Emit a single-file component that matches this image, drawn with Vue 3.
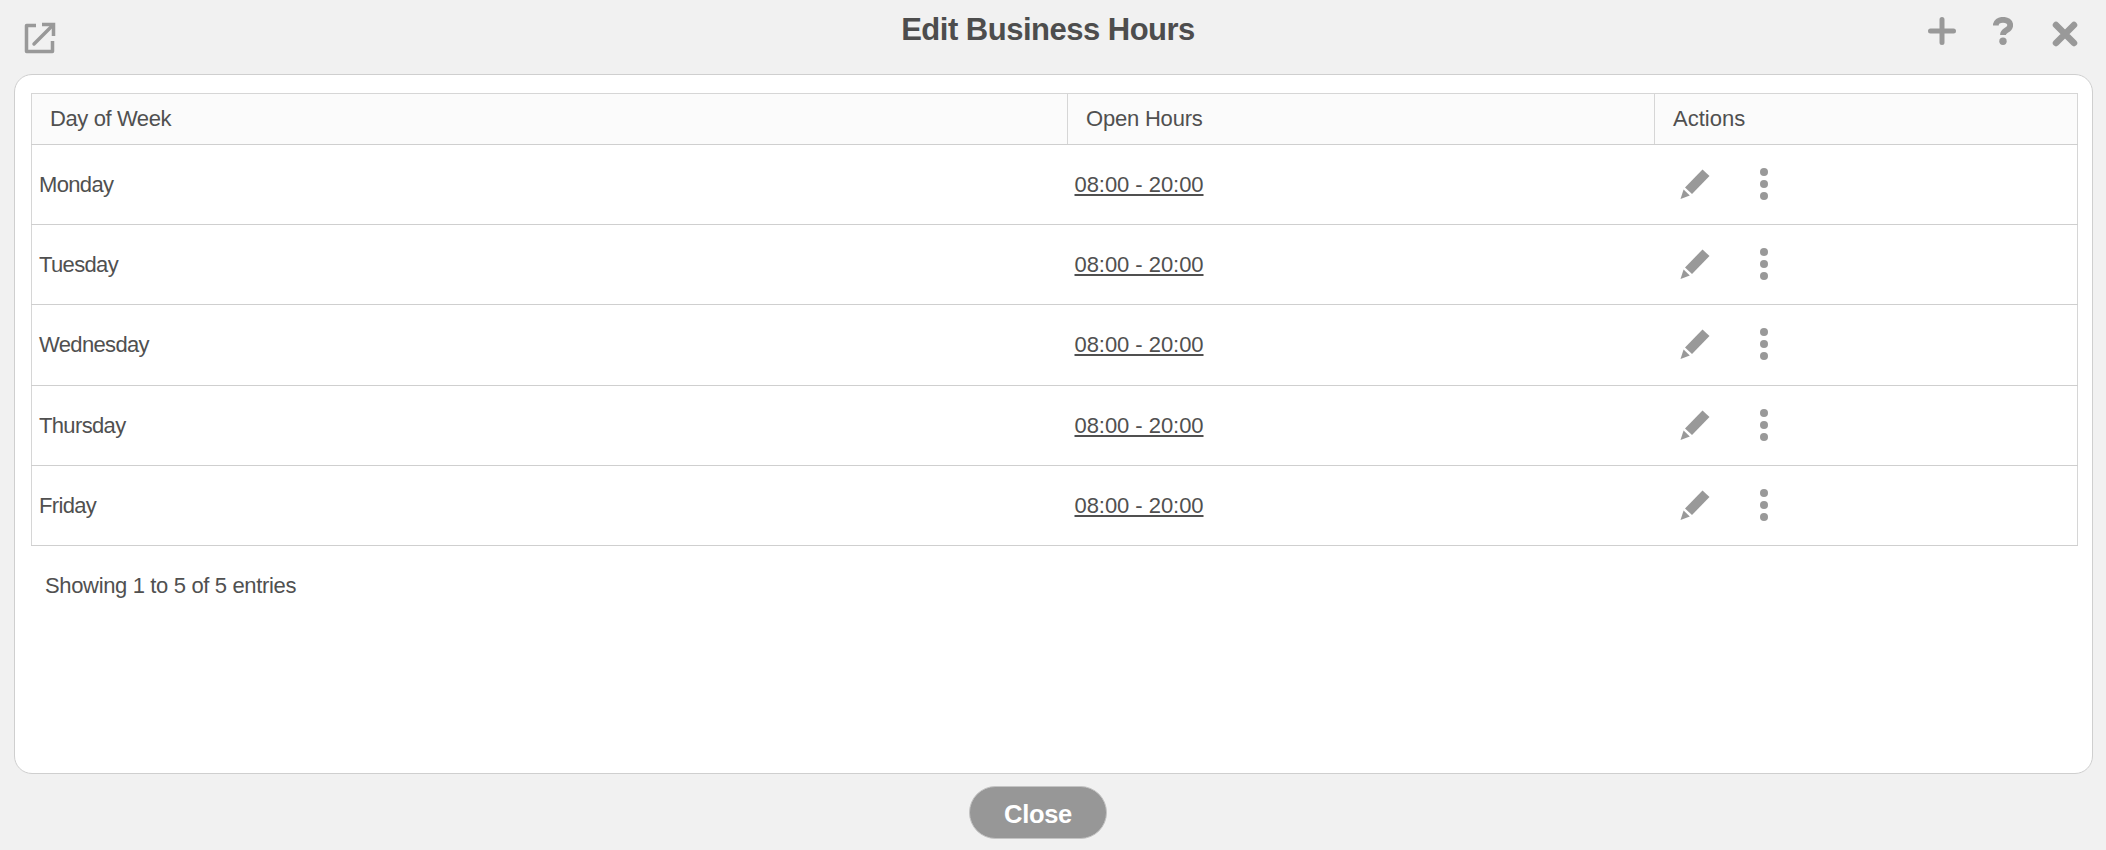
<template>
  <div class="page">
    <header class="top-bar">
      <div class="top-left">
        <button type="button" class="icon-btn popout" aria-label="Open in new window">
          <svg width="32" height="32" viewBox="0 0 32 32" fill="none" stroke="#999" stroke-width="3.500">
            <path d="M12 3.500H2.500v26h26V19" stroke-linejoin="round" />
            <path d="M10 22 28 4" stroke-linecap="round" />
            <path d="M18 2.500h11.500V14" />
          </svg>
        </button>
      </div>
      <h1 class="title">Edit Business Hours</h1>
      <div class="top-right">
        <button type="button" class="icon-btn add" aria-label="Add">
          <svg width="28" height="28" viewBox="0 0 28 28" fill="none" stroke="#999" stroke-width="5" stroke-linecap="round">
            <path d="M2.500 14h23M14 2.500v23" />
          </svg>
        </button>
        <button type="button" class="icon-btn help" aria-label="Help">
          <svg width="20" height="28" viewBox="0 0 20 28" fill="none" stroke="#999">
            <path d="M2.800 8.500C2.800 4.800 6 2.800 10 2.800s7.200 2 7.200 5.400c0 2.700-1.800 3.900-3.800 5.100-2 1.200-3.400 2.200-3.400 4.700" stroke-width="5.800" />
            <circle cx="10" cy="24.300" r="3.700" fill="#999" stroke="none" />
          </svg>
        </button>
        <button type="button" class="icon-btn dismiss" aria-label="Close">
          <svg width="26" height="26" viewBox="0 0 26 26" fill="none" stroke="#999" stroke-width="6.500" stroke-linecap="round">
            <path d="M4 4l18 18M22 4 4 22" />
          </svg>
        </button>
      </div>
    </header>

    <main class="card">
      <table class="hours">
        <colgroup>
          <col class="col-day" />
          <col class="col-open" />
          <col />
        </colgroup>
        <thead>
          <tr>
            <th class="head-day">Day of Week</th>
            <th class="head-open">Open Hours</th>
            <th>Actions</th>
          </tr>
        </thead>
        <tbody>
          <tr v-for="row in rows" :key="row.day">
            <td class="day">{{ row.day }}</td>
            <td><a class="hours-link" href="#">{{ row.hours }}</a></td>
            <td>
              <div class="actions">
                <svg class="pencil" width="30" height="32" viewBox="0 0 30 32" fill="#999">
                  <path d="M22.500 1.500 29.500 8 12 26 5 19.500Z" />
                  <path d="M3.600 21.500 9.800 27.500 0.500 31Z" />
                </svg>
                <svg class="dots" width="10" height="32" viewBox="0 0 10 32" fill="#999">
                  <circle cx="5" cy="4" r="4" />
                  <circle cx="5" cy="16" r="4" />
                  <circle cx="5" cy="28" r="4" />
                </svg>
              </div>
            </td>
          </tr>
        </tbody>
      </table>
      <p class="summary">Showing 1 to 5 of 5 entries</p>
    </main>

    <footer class="bottom-bar">
      <button type="button" class="close-btn">Close</button>
    </footer>
  </div>
</template>

<script setup>
const days = ['Monday', 'Tuesday', 'Wednesday', 'Thursday', 'Friday']
const rows = days.map((day) => ({ day, hours: '08:00 - 20:00' }))
</script>

<style scoped>
.page {
  display: flex;
  flex-direction: column;
  height: 850px;
  background: #f1f1f1;
  color: #505050;
  font-family: "Liberation Sans", Arial, sans-serif;
  overflow: hidden;
}
.top-bar {
  display: grid;
  grid-template-columns: 1fr auto 1fr;
  height: 74px;
  padding: 0 28px 0 18px;
  box-sizing: border-box;
  flex: none;
}
.top-left {
  display: flex;
  align-items: flex-start;
}
.top-right {
  display: flex;
  align-items: flex-start;
  justify-content: flex-end;
}
.icon-btn {
  display: block;
  padding: 0;
  border: 0;
  background: none;
}
.icon-btn svg {
  display: block;
}
.popout {
  margin: 22px 0 0 6px;
}
.add {
  margin: 17px 0 0 0;
}
.help {
  margin: 17px 0 0 37px;
}
.dismiss {
  margin: 21px 0 0 39px;
}
.title {
  margin: 12px 0 0;
  font-size: 31px;
  line-height: 36px;
  font-weight: 700;
  letter-spacing: -0.5px;
  color: #4d4d4d;
}
.card {
  flex: none;
  height: 700px;
  margin: 0 13px 0 14px;
  padding: 18px 14px 0 16px;
  box-sizing: border-box;
  background: #fff;
  border: 1px solid #cfcfcf;
  border-radius: 18px;
}
.hours {
  width: 100%;
  table-layout: fixed;
  border-collapse: collapse;
  font-size: 22px;
}
.col-day {
  width: 1036px;
}
.col-open {
  width: 587px;
}
.hours th {
  height: 51px;
  padding: 0 18px;
  box-sizing: border-box;
  text-align: left;
  font-weight: 400;
  background: #fbfbfb;
  border: 1px solid #d6d6d6;
  border-bottom-color: #cfcfcf;
}
.head-day {
  letter-spacing: -0.4px;
}
.head-open {
  letter-spacing: -0.2px;
}
.hours td {
  height: 80.2px;
  padding: 1px 7px 0;
  box-sizing: border-box;
  border-top: 1px solid #cfcfcf;
  border-bottom: 1px solid #cfcfcf;
}
.hours td:first-child {
  border-left: 1px solid #d6d6d6;
}
.hours td:last-child {
  border-right: 1px solid #d6d6d6;
  padding-left: 25px;
}
.hours .day {
  letter-spacing: -0.65px;
}
.hours-link {
  color: #505050;
  letter-spacing: -0.05px;
  text-decoration: underline;
}
.actions {
  display: flex;
  align-items: center;
  margin-top: -2px;
}
.dots {
  margin-left: 49px;
}
.summary {
  margin: 26px 0 0 14px;
  font-size: 22px;
  line-height: 28px;
  letter-spacing: -0.35px;
}
.bottom-bar {
  display: flex;
  justify-content: center;
  padding: 12px 30px 0 0;
}
.close-btn {
  width: 138px;
  height: 53px;
  padding: 3px 0 0;
  border: 1px solid #c4c4c4;
  border-radius: 27px;
  background: #979797;
  color: #fff;
  font-family: inherit;
  font-size: 25.500px;
  font-weight: 700;
  letter-spacing: -0.3px;
}
</style>
